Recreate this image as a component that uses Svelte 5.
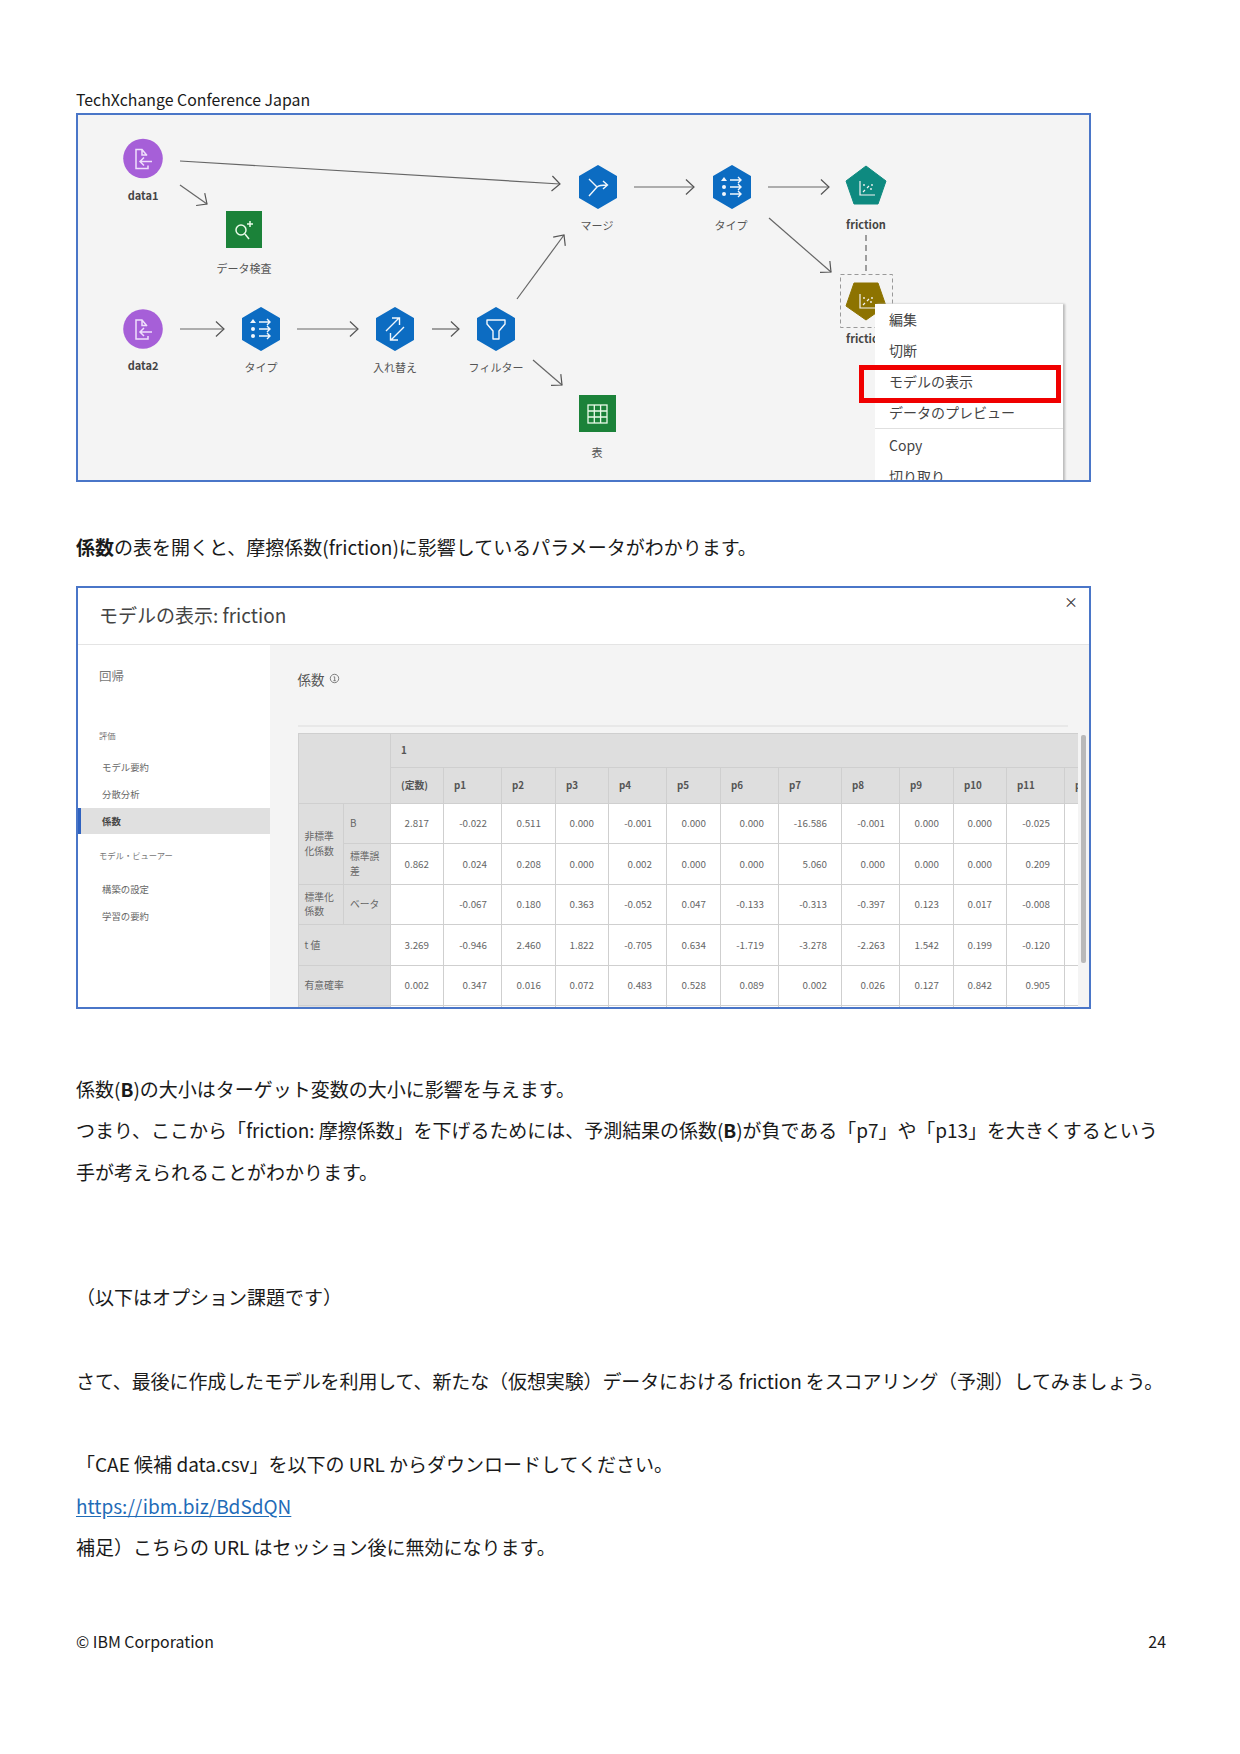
<script>
  const hexes = [
    { x: 261, y: 329, icon: 'type' },
    { x: 395, y: 329, icon: 'swap' },
    { x: 496, y: 329, icon: 'filter' },
    { x: 598, y: 187, icon: 'merge' },
    { x: 732, y: 187, icon: 'type' }
  ];
  const arrows = [
    [180, 161, 560, 184], [180, 185, 207, 204], [180, 329, 224, 329], [297, 329, 358, 329],
    [432, 329, 459, 329], [517, 299, 564, 235], [533, 360, 562, 385], [634, 187, 694, 187],
    [768, 187, 829, 187], [769, 218, 831, 272]
  ];
  function head(a) {
    const [x1, y1, x2, y2] = a;
    const t = Math.atan2(y2 - y1, x2 - x1);
    const l = 11, s = 0.75;
    const p = (d) => `${x2 - l * Math.cos(t + d)},${y2 - l * Math.sin(t + d)}`;
    return `M${p(s)} L${x2},${y2} L${p(-s)}`;
  }
  const labels = [
    { x: 143, y: 200, t: 'data1', b: true }, { x: 143, y: 370, t: 'data2', b: true },
    { x: 244, y: 273, t: 'データ検査' }, { x: 261, y: 372, t: 'タイプ' }, { x: 395, y: 372, t: '入れ替え' },
    { x: 496, y: 372, t: 'フィルター' }, { x: 597, y: 230, t: 'マージ' }, { x: 731, y: 230, t: 'タイプ' },
    { x: 866, y: 229, t: 'friction', b: true }, { x: 866, y: 343, t: 'friction', b: true }, { x: 597, y: 457, t: '表' }
  ];
  const menu = ['編集', '切断', 'モデルの表示', 'データのプレビュー'];

  const colWidths = [45.5, 47, 53, 58, 54, 53, 58, 54, 58, 63, 58, 54, 53, 58, 40];
  const cols = ['(定数)', 'p1', 'p2', 'p3', 'p4', 'p5', 'p6', 'p7', 'p8', 'p9', 'p10', 'p11', 'p12'];
  const rows = {
    b: ['2.817', '-0.022', '0.511', '0.000', '-0.001', '0.000', '0.000', '-16.586', '-0.001', '0.000', '0.000', '-0.025', ''],
    se: ['0.862', '0.024', '0.208', '0.000', '0.002', '0.000', '0.000', '5.060', '0.000', '0.000', '0.000', '0.209', ''],
    beta: ['', '-0.067', '0.180', '0.363', '-0.052', '0.047', '-0.133', '-0.313', '-0.397', '0.123', '0.017', '-0.008', ''],
    t: ['3.269', '-0.946', '2.460', '1.822', '-0.705', '0.634', '-1.719', '-3.278', '-2.263', '1.542', '0.199', '-0.120', ''],
    sig: ['0.002', '0.347', '0.016', '0.072', '0.483', '0.528', '0.089', '0.002', '0.026', '0.127', '0.842', '0.905', ''],
    end: ['', '', '', '', '', '', '', '', '', '', '', '', '']
  };
</script>

{#snippet dataIcon(cx, cy)}
  <g transform="translate({cx} {cy})" fill="none" stroke="#efe0fb" stroke-width="1.5">
    <path d="M4 -3 L-1 -9 H-7 V10 H5 V7 M-1 -9 V-3.5 H4" />
    <path d="M9 3 H-3 M1 -1 L-3 3 L1 7" />
  </g>
{/snippet}

{#snippet chartIcon(cx, cy)}
  <g transform="translate({cx} {cy})" fill="none" stroke="#f4f4f4" stroke-width="1.2">
    <path d="M-7 -7 V7 H8" />
    <path d="M-4 4 L-2 2 M0 0 L2 -2" />
    <circle cx="-3" cy="-3" r="0.9" fill="#f4f4f4" stroke="none" />
    <circle cx="5" cy="-3" r="0.9" fill="#f4f4f4" stroke="none" />
    <circle cx="4" cy="1" r="0.9" fill="#f4f4f4" stroke="none" />
  </g>
{/snippet}

<div class="page">
  <div class="head">TechXchange Conference Japan</div>

  <div class="fig flow">
    <svg class="canvas" viewBox="78 115 1010 365" width="1010" height="365">
      {#each arrows as a}
        <path d="M{a[0]},{a[1]} L{a[2]},{a[3]}" stroke="#666" stroke-width="1.2" fill="none" />
        <path d={head(a)} stroke="#555" stroke-width="1.2" fill="none" />
      {/each}

      <circle cx="143" cy="158.5" r="19.8" fill="#a65fd8" />
      {@render dataIcon(143, 158.5)}
      <circle cx="143" cy="329" r="19.8" fill="#a65fd8" />
      {@render dataIcon(143, 329)}

      <rect x="226" y="211" width="36" height="37" fill="#1b8239" />
      <g fill="none" stroke="#eafbe9" stroke-width="1.5">
        <circle cx="241" cy="230" r="5" />
        <path d="M245 234 L249 239" />
        <path d="M250 221 v6 M247 224 h6" />
      </g>

      <rect x="579" y="395" width="37" height="37" fill="#1b8239" />
      <g fill="none" stroke="#eafbe9" stroke-width="1.3">
        <rect x="588" y="405" width="19" height="18" />
        <path d="M594.3 405 v18 M600.6 405 v18 M588 411 h19 M588 417 h19" />
      </g>

      {#each hexes as h}
        <g transform="translate({h.x} {h.y})">
          <path d="M0 -21 L18 -10.5 V10.5 L0 21 L-18 10.5 V-10.5 Z" fill="#0c6cc2" stroke="#0c6cc2" stroke-width="2" stroke-linejoin="round" />
          <g fill="none" stroke="#f2f7fc" stroke-width="1.4">
            {#if h.icon === 'type'}
              <path d="M-8 -10 l3 4 h-6 z" fill="#f2f7fc" stroke="none" />
              <circle cx="-8" cy="0" r="2" fill="#f2f7fc" stroke="none" />
              <circle cx="-8" cy="7" r="2" fill="#f2f7fc" stroke="none" />
              <path d="M-2 -7 H9 M6 -10 L9 -7 L6 -4 M-2 0 H9 M6 -3 L9 0 L6 3 M-2 7 H9 M6 4 L9 7 L6 10" />
            {:else if h.icon === 'swap'}
              <path d="M-9 2 L4 -11 M-3 -11 H4.5 V-4" />
              <path d="M9 -2 L-4 11 M3 11 H-4.5 V4" />
            {:else if h.icon === 'filter'}
              <path d="M-9 -9 H9 V-5 L3 2 V10 H-3 V2 L-9 -5 Z" stroke-linejoin="round" />
            {:else}
              <path d="M-9 -8 L-1 0 M-9 9 L-1 0 Q1 -2 9 -2 M5 -6 L9.5 -2 L5 2" />
            {/if}
          </g>
        </g>
      {/each}

      <path d="M866 166 L886 181 L878 204 H854 L846 181 Z" fill="#0e8a80" stroke="#0e8a80" stroke-width="1" stroke-linejoin="round" />
      {@render chartIcon(867, 188)}

      <path d="M866 235 V272" stroke="#888" stroke-width="1.6" stroke-dasharray="6 4" />
      <rect x="840.5" y="274.5" width="52" height="53" fill="none" stroke="#999" stroke-width="1" stroke-dasharray="4 3" />
      <path d="M854 283 H878 L886 306 L866 320 L846 306 Z" fill="#8d7300" stroke="#8d7300" stroke-width="1" stroke-linejoin="round" />
      {@render chartIcon(867, 301)}

      {#each labels as l}
        <text x={l.x} y={l.y} class:bold={l.b} class="lbl" text-anchor="middle">{l.t}</text>
      {/each}
    </svg>

    <div class="menu">
      {#each menu as m}<div class="mi">{m}</div>{/each}
      <div class="msep"></div>
      <div class="mi">Copy</div>
      <div class="mi">切り取り</div>
      <div class="redbox"></div>
    </div>
  </div>

  <p class="line lead"><b>係数</b>の表を開くと、摩擦係数(friction)に影響しているパラメータがわかります。</p>

  <div class="fig modal">
    <div class="mhead">モデルの表示: friction<span class="close">×</span></div>
    <div class="mbody">
      <aside>
        <div class="side-title">回帰</div>
        <div class="side-cap first">評価</div>
        <div class="side-item">モデル要約</div>
        <div class="side-item">分散分析</div>
        <div class="side-item active">係数</div>
        <div class="side-cap second">モデル・ビューアー</div>
        <div class="side-item">構築の設定</div>
        <div class="side-item">学習の要約</div>
      </aside>
      <main>
        <div class="mtitle">係数 <svg class="info" viewBox="0 0 12 12" width="11" height="11"><circle cx="6" cy="6" r="4.6" fill="none" stroke="#666" stroke-width="0.9"/><path d="M5 4.2 H6.2 V8.4 M4.8 8.4 H7.4" fill="none" stroke="#666" stroke-width="0.9"/></svg></div>
        <div class="rule"></div>
        <div class="twrap">
          <div class="tclip">
            <table>
              <colgroup>
                {#each colWidths as w}<col style="width:{w}px" />{/each}
              </colgroup>
              <thead>
                <tr class="h1"><th colspan="2" rowspan="2"></th><th colspan="13">1</th></tr>
                <tr class="h2">{#each cols as c}<th>{c}</th>{/each}</tr>
              </thead>
              <tbody>
                <tr class="r"><th rowspan="2">非標準<br />化係数</th><th>B</th>{#each rows.b as v}<td>{v}</td>{/each}</tr>
                <tr class="r"><th>標準誤<br />差</th>{#each rows.se as v}<td>{v}</td>{/each}</tr>
                <tr class="r"><th>標準化<br />係数</th><th>ベータ</th>{#each rows.beta as v}<td>{v}</td>{/each}</tr>
                <tr class="r"><th colspan="2">t 値</th>{#each rows.t as v}<td>{v}</td>{/each}</tr>
                <tr class="r"><th colspan="2">有意確率</th>{#each rows.sig as v}<td>{v}</td>{/each}</tr>
                <tr class="r"><th colspan="2"></th>{#each rows.end as v}<td>{v}</td>{/each}</tr>
              </tbody>
            </table>
          </div>
          <div class="scroll"></div>
        </div>
      </main>
    </div>
  </div>

  <div class="body">
    <p class="line">係数(<b>B</b>)の大小はターゲット変数の大小に影響を与えます。</p>
    <p class="line tight1">つまり、ここから「friction: 摩擦係数」を下げるためには、予測結果の係数(<b>B</b>)が負である「p7」や「p13」を大きくするという</p>
    <p class="line">手が考えられることがわかります。</p>
    <p class="line gap2">（以下はオプション課題です）</p>
    <p class="line gap1 tight2">さて、最後に作成したモデルを利用して、新たな（仮想実験）データにおける friction をスコアリング（予測）してみましょう。</p>
    <p class="line gap1">「CAE 候補 data.csv」を以下の URL からダウンロードしてください。</p>
    <p class="line"><span class="link">https://ibm.biz/BdSdQN</span></p>
    <p class="line">補足）こちらの URL はセッション後に無効になります。</p>
  </div>

  <div class="foot"><span>© IBM Corporation</span><span>24</span></div>
</div>

<style>
  :global(body) { margin: 0; background: #fff; }
  .page {
    width: 1240px; height: 1754px; box-sizing: border-box;
    padding: 88px 74px 0 76px;
    font-family: "Noto Sans CJK JP", "Noto Sans", sans-serif;
    color: #1a1a1a; overflow: hidden;
  }
  .head { font-size: 15.85px; line-height: 24px; height: 25px; }
  .fig { width: 1015px; box-sizing: border-box; border: 2px solid #4a76c8; overflow: hidden; position: relative; }
  .flow { height: 369px; background: #f4f4f4; }
  .canvas { display: block; }
  .lbl { font-size: 11px; fill: #555; font-family: "Noto Sans CJK JP", sans-serif; }
  .lbl.bold { font-weight: 700; fill: #444; }
  .menu {
    position: absolute; left: 797px; top: 188.5px; width: 188px; height: 200px;
    background: #fff; box-shadow: 2px 0 2px #bbb; font-size: 14px; color: #444;
  }
  .mi { height: 31px; line-height: 31px; padding-left: 14px; }
  .msep { height: 1px; background: #e0e0e0; margin: 0 0 1px; }
  .redbox { position: absolute; left: -16px; top: 61.5px; width: 202px; height: 38px; box-sizing: border-box; border: 5px solid #f00000; }

  .line { margin: 0; font-size: 19px; line-height: 41.7px; white-space: nowrap; }
  .lead { margin: 44px 0 18px; }
  .tight1 { letter-spacing: -0.04px; }
  .tight2 { letter-spacing: -0.11px; }

  .modal { height: 423px; background: #fff; }
  .mhead { height: 57px; line-height: 54px; padding-left: 21px; font-size: 19px; color: #444; border-bottom: 1px solid #e4e4e4; position: relative; box-sizing: border-box; }
  .close { position: absolute; right: 11px; top: -14px; font-size: 14px; color: #333; }
  .mbody { display: grid; grid-template-columns: 192px 1fr; height: 366px; }
  aside { padding: 21.5px 0 0 0; color: #666; }
  .side-title { font-size: 12.5px; line-height: 20px; padding-left: 21px; color: #777; }
  .side-cap { font-size: 8.3px; line-height: 14px; padding-left: 21px; color: #777; }
  .side-cap.first { margin: 42px 0 12px; }
  .side-cap.second { margin: 14px 0 14px; }
  .side-item { font-size: 9.4px; line-height: 27px; height: 27px; padding-left: 24px; color: #666; box-sizing: border-box; }
  .side-item.active { background: #e0e0e0; border-left: 3px solid #2f62c0; padding-left: 21px; font-weight: 700; color: #444; height: 26px; line-height: 26px; }
  main { background: #f4f4f4; padding: 24px 0 0 27.5px; overflow: hidden; }
  .mtitle { font-size: 13.5px; line-height: 20px; color: #555; display: flex; align-items: center; gap: 4px; }
  .rule { height: 2px; background: #e8e8e8; width: 770px; margin-top: 36px; }
  .twrap { position: relative; margin-top: 6px; width: 790px; height: 282px; }
  .tclip { width: 780px; height: 282px; overflow: hidden; }
  table { border-collapse: collapse; table-layout: fixed; width: 807px; font-size: 9.8px; color: #555; }
  th, td { border: 1px solid #cfcfcf; padding: 0; box-sizing: border-box; overflow: hidden; white-space: nowrap; }
  th { background: #dedede; text-align: left; font-weight: 400; padding-left: 6px; color: #666; line-height: 14.5px; }
  thead th { font-weight: 700; padding-left: 10px; color: #555; }
  tbody td { background: #fff; text-align: right; padding-right: 14px; color: #666; }
  .h1 { height: 34px; }
  .h2 { height: 36px; }
  .r { height: 40.5px; }
  .scroll { position: absolute; left: 783px; top: 2px; width: 5px; height: 228px; background: #b9b9b9; border-radius: 2px; }

  .body { margin-top: 59px; }
  .gap2 { margin-top: 83.4px; }
  .gap1 { margin-top: 41.7px; }
  .link { color: #1f6cb8; text-decoration: underline; text-underline-offset: 2px; }
  .foot { display: flex; justify-content: space-between; font-size: 15.9px; line-height: 24px; margin-top: 62px; }
</style>
